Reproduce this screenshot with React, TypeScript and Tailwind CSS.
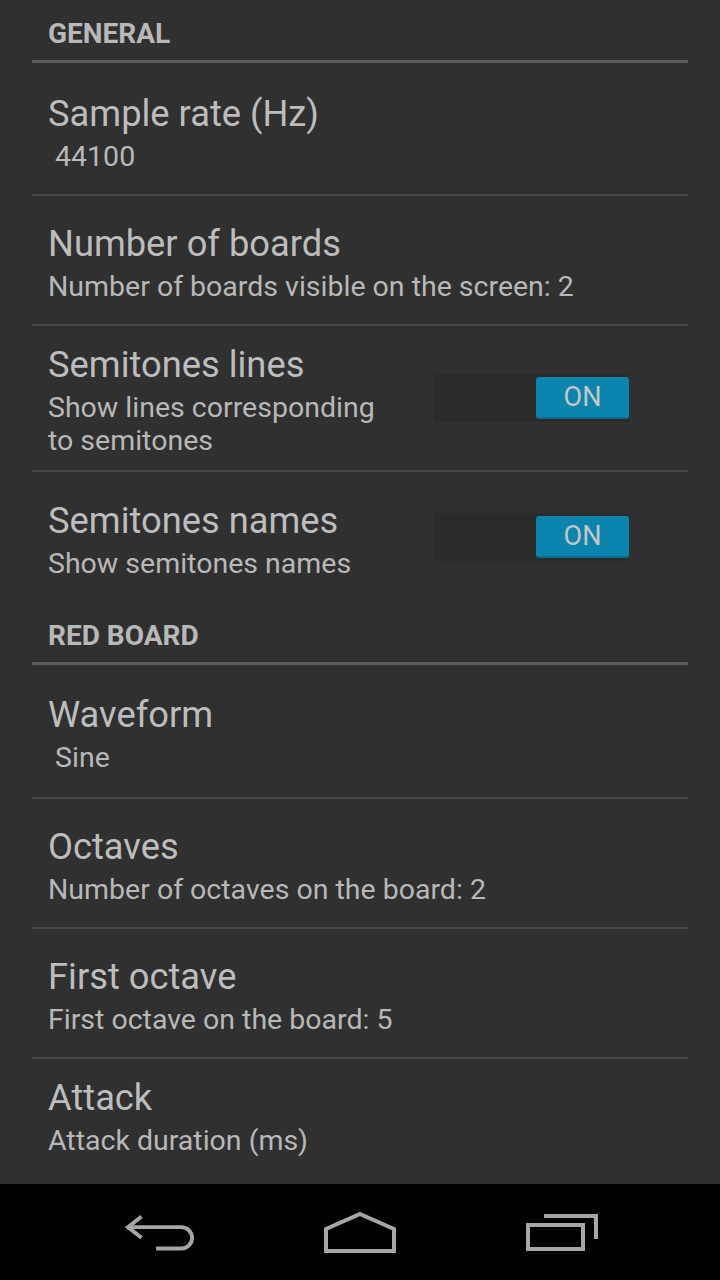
import React from "react";

type PrefRowProps = {
  title: string;
  summary: React.ReactNode;
  height: string;
  toggle?: boolean;
};

function SectionHeader({ label }: { label: string }) {
  return (
    <div>
      <div className="flex h-[60px] items-center px-[48px] pt-[8px] text-[28px] font-bold text-[#b8b8b8]">
        {label}
      </div>
      <div className="mx-[32px] h-[3px] bg-[#5a5a5a]" />
    </div>
  );
}

function Divider() {
  return <div className="mx-[32px] h-[2px] bg-[#494949]" />;
}

function Toggle() {
  return (
    <div className="flex h-[48px] w-[195px] items-center justify-end bg-[#2b2b2b]">
      <div className="flex h-[42px] w-[93px] items-center justify-center rounded-[3px] border-b-2 border-[#086d8f] bg-[#0b84ae] text-[27px] leading-none text-[#c6c6c6]">
        ON
      </div>
    </div>
  );
}

function PrefRow({ title, summary, height, toggle }: PrefRowProps) {
  return (
    <div className={`flex items-center pl-[48px] pr-[91px] ${height}`}>
      <div className="flex min-w-0 flex-1 flex-col justify-center pt-[4px] pr-[40px]">
        <div className="text-[36.3px] leading-[44px] text-[#bdbdbd]">{title}</div>
        <div className="mt-[4px] text-[28.5px] leading-[33px] text-[#b8b8b8]">
          {summary}
        </div>
      </div>
      {toggle && <Toggle />}
    </div>
  );
}

function BackIcon() {
  return (
    <svg width="72" height="44" viewBox="0 0 74 44" fill="none" stroke="#a6a6a6" strokeWidth="4">
      <path d="M18 6 L4 17 L18 28" strokeLinejoin="miter" />
      <path d="M4 17 H59 A11 11 0 0 1 59 39 H33" />
    </svg>
  );
}

function HomeIcon() {
  return (
    <svg width="76" height="45" viewBox="2 0 76 45" fill="none" stroke="#a6a6a6" strokeWidth="4">
      <path d="M40 4 L74 19 V41 H6 V19 Z" strokeLinejoin="miter" />
    </svg>
  );
}

function RecentIcon() {
  return (
    <svg width="76" height="41" viewBox="0 0 76 41" fill="none" stroke="#a6a6a6" strokeWidth="4">
      <path d="M20 4 H72 V27" />
      <rect x="4" y="13" width="55" height="24" />
    </svg>
  );
}

export default function App() {
  return (
    <div
      className="flex h-[1280px] w-[720px] flex-col overflow-hidden bg-[#303030]"
      style={{ fontFamily: "Roboto, 'Noto Sans', sans-serif" }}
    >
      <div className="flex-1 overflow-hidden">
        <SectionHeader label="GENERAL" />
        <PrefRow title="Sample rate (Hz)" summary={"\u00a044100"} height="h-[131px] pt-[3px]" />
        <Divider />
        <PrefRow
          title="Number of boards"
          summary="Number of boards visible on the screen: 2"
          height="h-[128px]"
        />
        <Divider />
        <PrefRow
          title="Semitones lines"
          summary="Show lines corresponding to semitones"
          height="h-[144px]"
          toggle
        />
        <Divider />
        <PrefRow
          title="Semitones names"
          summary="Show semitones names"
          height="h-[130px]"
          toggle
        />
        <SectionHeader label="RED BOARD" />
        <PrefRow title="Waveform" summary={"\u00a0Sine"} height="h-[132px]" />
        <Divider />
        <PrefRow
          title="Octaves"
          summary="Number of octaves on the board: 2"
          height="h-[128px]"
        />
        <Divider />
        <PrefRow
          title="First octave"
          summary="First octave on the board: 5"
          height="h-[128px]"
        />
        <Divider />
        <PrefRow title="Attack" summary="Attack duration (ms)" height="h-[110px]" />
      </div>
      <div className="flex h-[96px] shrink-0 items-center justify-center bg-black">
        <div className="flex w-[200px] justify-center">
          <BackIcon />
        </div>
        <div className="flex w-[200px] justify-center">
          <HomeIcon />
        </div>
        <div className="flex w-[200px] justify-center pl-[4px]">
          <RecentIcon />
        </div>
      </div>
    </div>
  );
}
